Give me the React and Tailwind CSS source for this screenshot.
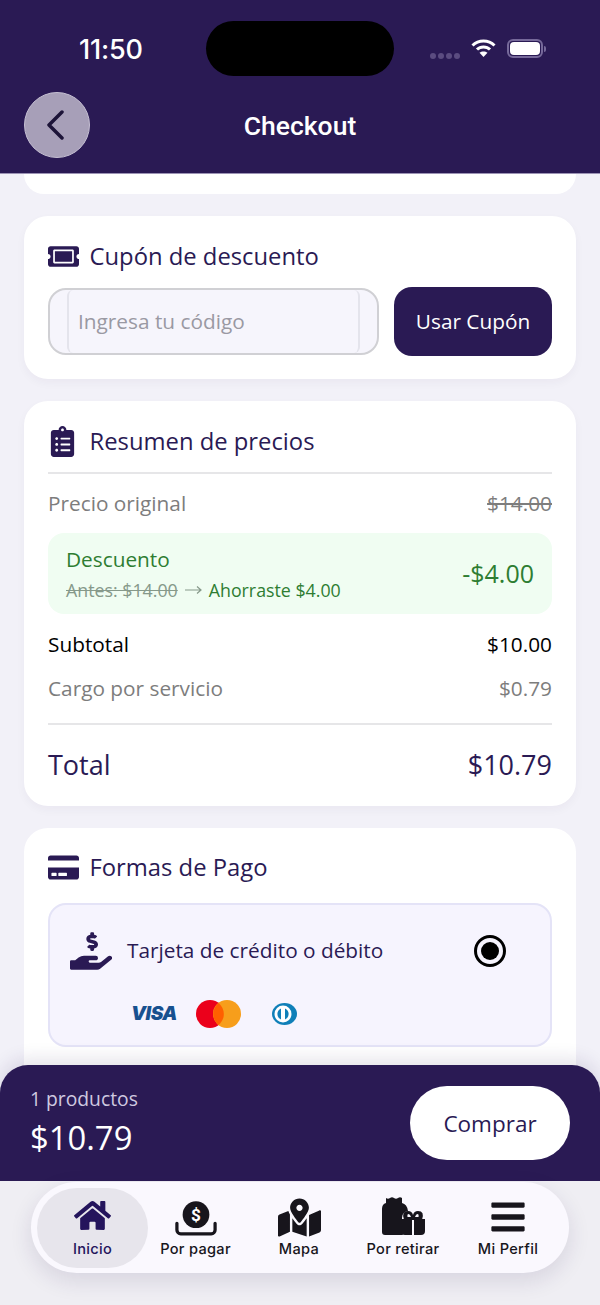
import {
  FaTicketAlt,
  FaClipboardList,
  FaCreditCard,
  FaHandHoldingUsd,
  FaHome,
  FaBars,
  FaMapMarkedAlt,
} from 'react-icons/fa'

const openSans = 'font-["Open_Sans",sans-serif]'

function StatusBar() {
  return (
    <div className="flex h-[76px] items-start">
      <span className='ml-[79px] mt-[36px] w-[63px] font-["Inter",sans-serif] text-[27px] leading-[28px] font-medium text-white tracking-[-0.2px]'>11:50</span>
      <div className="ml-[64px] mt-[21px] h-[55px] w-[188px] rounded-[28px] bg-black" />
      <div className="ml-[36px] mt-[39px] flex items-start">
        <div className="mt-[14px] flex gap-[2px]">
          <span className="h-[6px] w-[6px] rounded-full bg-[#5b4c80]" />
          <span className="h-[6px] w-[6px] rounded-full bg-[#5b4c80]" />
          <span className="h-[6px] w-[6px] rounded-full bg-[#5b4c80]" />
          <span className="h-[6px] w-[6px] rounded-full bg-[#5b4c80]" />
        </div>
        <svg className="ml-[11px]" width="25" height="18" viewBox="0 0 25 18" fill="none" stroke="white" strokeWidth="3">
          <path d="M1.5 6.5C7.5 0.5 17.5 0.5 23.5 6.5" />
          <path d="M6 10.5C9.5 7 15.5 7 19 10.5" />
          <path d="M12.5 18L8.5 13.8C10.8 12 14.2 12 16.5 13.8Z" fill="white" stroke="none" />
        </svg>
        <div className="ml-[11px] flex items-center">
          <div className="flex h-[19px] w-[36px] items-center justify-center rounded-[6px] border-2 border-[#76699a]">
            <div className="h-[13px] w-[30px] rounded-[4px] bg-white" />
          </div>
          <div className="ml-[1px] h-[6px] w-[2px] rounded-r-full bg-[#76699a]" />
        </div>
      </div>
    </div>
  )
}

function Header() {
  return (
    <header className="relative h-[174px] shrink-0 border-b border-[#9c93b5] bg-[#2a1a54]">
      <StatusBar />
      <div className="relative flex h-[97px] items-center justify-center pt-[3px]">
        <button
          type="button"
          aria-label="Volver"
          className="absolute left-[24px] top-[16px] flex h-[66px] w-[66px] items-center justify-center rounded-full border border-[#c5bfd2] bg-[#a79fb8]"
        >
          <svg className="mr-[3px]" width="20" height="30" viewBox="0 0 20 30" fill="none" stroke="#1d1438" strokeWidth="3.5" strokeLinecap="round" strokeLinejoin="round">
            <path d="M16 2L3 15L16 28" />
          </svg>
        </button>
        <h1 className='font-["Roboto",sans-serif] text-[26.5px] font-medium leading-[30px] text-white'>Checkout</h1>
      </div>
    </header>
  )
}

function CardTitle({ icon, children }) {
  return (
    <div className="flex items-center">
      <span className="flex w-[42px] shrink-0 items-center text-[#2a1a54]">{icon}</span>
      <h2 className={`${openSans} ml-[-0.5px] text-[23.8px] leading-[32px] text-[#2a1a54]`}>{children}</h2>
    </div>
  )
}

function CouponCard() {
  return (
    <section className="rounded-[24px] bg-white px-6 pb-[23px] pt-[24px] shadow-[0_4px_10px_rgba(42,26,84,0.04)]">
      <CardTitle icon={<FaTicketAlt size={31} />}>Cupón de descuento</CardTitle>
      <div className="mt-[15px] flex items-center justify-between">
        <div className="flex h-[67px] w-[331px] rounded-[18px] border-2 border-[#d0d0d4] bg-[#f6f5fc] pl-[17px] pr-[17px]">
          <div className={`${openSans} flex flex-1 items-center rounded-[6px] border-x-2 border-[#e4e4ec] pl-[9px] pt-[1px] text-[20.8px] text-[#9a99a3]`}>
            Ingresa tu código
          </div>
        </div>
        <button type="button" className={`${openSans} h-[69px] w-[158px] rounded-[18px] bg-[#2a1a54] text-[20.8px] text-white`}>
          Usar Cupón
        </button>
      </div>
    </section>
  )
}

function PriceRow({ label, value, className }) {
  return (
    <div className={`flex items-center justify-between ${openSans} ${className}`}>
      <span>{label}</span>
      <span>{value}</span>
    </div>
  )
}

function SummaryCard() {
  return (
    <section className="rounded-[24px] bg-white px-6 pb-[23px] pt-[24px] shadow-[0_4px_10px_rgba(42,26,84,0.04)]">
      <CardTitle icon={<FaClipboardList size={31} className="ml-[-1px]" />}>Resumen de precios</CardTitle>
      <div className="mt-[15px] border-t-2 border-[#e6e6e8]" />
      <PriceRow
        className="mt-[15px] h-[30px] text-[20.8px] text-[#7d7d7d]"
        label="Precio original"
        value={<span className="line-through">$14.00</span>}
      />
      <div className={`${openSans} mt-[14px] flex h-[81px] items-center justify-between rounded-[16px] bg-[#f0fdf2] pl-[18px] pr-[18px] text-[#2e7d32]`}>
        <div>
          <p className="text-[20.8px] leading-[28px]">Descuento</p>
          <p className="mt-[5px] flex items-center text-[17.8px] leading-[24px]">
            <span className="text-[#86998a] line-through">Antes: $14.00</span>
            <svg className="mx-[7px]" width="17" height="10" viewBox="0 0 17 10" fill="none" stroke="#86998a" strokeWidth="1.2">
              <path d="M0 5H16M12 1.5L16 5L12 8.5" />
            </svg>
            Ahorraste $4.00
          </p>
        </div>
        <span className="text-[25px]">-$4.00</span>
      </div>
      <PriceRow className="mt-[16px] h-[30px] text-[20.8px] text-black" label="Subtotal" value="$10.00" />
      <PriceRow className="mt-[14px] h-[30px] text-[20.8px] text-[#7d7d7d]" label="Cargo por servicio" value="$0.79" />
      <div className="mt-[19px] border-t-2 border-[#e6e6e8]" />
      <PriceRow className="mt-[22px] h-[36px] text-[27px] text-[#2a1a54]" label="Total" value="$10.79" />
    </section>
  )
}

function PaymentCard() {
  return (
    <section className="h-[400px] shrink-0 rounded-[24px] bg-white px-6 pt-[23px]">
      <CardTitle icon={<FaCreditCard size={31} />}>Formas de Pago</CardTitle>
      <div className="mt-[20px] h-[144px] rounded-[18px] border-2 border-[#e4e3f7] bg-[#f6f4fe] pl-[20px] pr-[44px] pt-[25px]">
        <div className="flex items-center justify-between">
          <div className="flex items-center">
            <FaHandHoldingUsd size={42} className="text-[#2a1a54]" />
            <span className={`${openSans} ml-[15px] text-[20.8px] text-[#2a1a54]`}>Tarjeta de crédito o débito</span>
          </div>
          <div className="flex h-[32px] w-[32px] items-center justify-center rounded-full border-[3px] border-black">
            <div className="h-[18px] w-[18px] rounded-full bg-black" />
          </div>
        </div>
        <div className="ml-[61px] mt-[28px] flex items-center">
          <span className='w-[45px] font-["Inter",sans-serif] text-[19px] font-black italic leading-[24px] tracking-[-0.5px] text-[#17508f]'>VISA</span>
          <svg className="ml-[20px]" width="45" height="28" viewBox="0 0 45 28">
            <circle cx="14" cy="14" r="14" fill="#eb001b" />
            <circle cx="31" cy="14" r="14" fill="#f79e1b" />
            <path d="M22.5 3a14 14 0 0 1 0 22a14 14 0 0 1 0-22z" fill="#ff5f00" />
          </svg>
          <svg className="ml-[31px]" width="25" height="24" viewBox="0 0 25 24">
            <ellipse cx="12.5" cy="12" rx="12.5" ry="11" fill="#0f7fb8" />
            <circle cx="11" cy="12" r="8.5" fill="white" />
            <path d="M9 6.5v11a6 6 0 0 1 0-11z" fill="#0f7fb8" />
            <path d="M13 6.5a6 6 0 0 1 0 11z" fill="#0f7fb8" />
          </svg>
        </div>
      </div>
    </section>
  )
}

function CheckoutBar() {
  return (
    <div className="flex h-[116px] items-center justify-between rounded-t-[28px] bg-[#2a1a54] pl-[30px] pr-[30px] shadow-[0_-6px_18px_rgba(42,26,84,0.12)]">
      <div className={`${openSans} pb-[2px]`}>
        <p className="text-[19.3px] leading-[24px] text-[#cfc9e0]">1 productos</p>
        <p className="mt-[7px] text-[32.8px] leading-[40px] text-white">$10.79</p>
      </div>
      <button type="button" className={`${openSans} h-[74px] w-[160px] rounded-[37px] bg-white pt-[1px] text-[22.5px] text-[#2a1a54]`}>
        Comprar
      </button>
    </div>
  )
}

function PayIcon() {
  return (
    <svg width="42" height="35" viewBox="0 0 44 36" fill="none">
      <circle cx="22" cy="14" r="14" fill="#17151c" />
      <text x="22" y="20.5" textAnchor="middle" fontSize="18" fontWeight="700" fill="white" fontFamily="Roboto, sans-serif">$</text>
      <path d="M2 23v7a4 4 0 0 0 4 4h32a4 4 0 0 0 4-4v-7" stroke="#17151c" strokeWidth="3.4" strokeLinecap="round" />
    </svg>
  )
}

function PickupIcon() {
  return (
    <svg width="44" height="39" viewBox="0 0 44 39" fill="#17151c">
      <path d="M5 1q2 1.5 4 0t4 0t4 0t4 0v5q5 1 6 8q-6 1-6 7v12q0 3 1 5H4q-3 0-3-3V12q0-5 4-6z" />
      <path fillRule="evenodd" d="M23 23q-3-9 4-9q4 0 5 4q1-4 5-4q7 0 4 9zM26.500 20h3.500q-1-3-2.500-3t-1 3zM34 20h3.500q.5-3-1-3t-2.500 3z" />
      <path d="M20 22h11v16h-7q-4 0-4-4z" />
      <path d="M33 22h11v12q0 4-4 4h-7z" />
    </svg>
  )
}

function NavItem({ icon, label, active, className = '' }) {
  return (
    <div className={`flex h-[80px] flex-col items-center justify-end pb-[10px] ${className} ${active ? 'rounded-[40px] bg-[#e7e5ec] text-[#24145c]' : 'text-[#17151c]'}`}>
      <div className="flex h-[38px] items-end">{icon}</div>
      <span className='mt-[4px] font-["Inter",sans-serif] text-[14.6px] font-medium leading-[18px] tracking-[0.3px]'>{label}</span>
    </div>
  )
}

function TabBar() {
  return (
    <div className="h-[124px] bg-[#efeef3] pt-[1px]">
      <nav className="mx-[31px] grid h-[91px] grid-cols-[111px_95px_112px_96px_1fr] items-center rounded-[46px] bg-[#faf8fe] pl-[6px] pr-[7px] shadow-[0_8px_22px_rgba(42,26,84,0.12)]">
        <NavItem active icon={<FaHome size={37} className="mb-[2px]" />} label="Inicio" />
        <NavItem icon={<PayIcon />} label="Por pagar" />
        <NavItem icon={<FaMapMarkedAlt size={43} className="mb-[-3px]" />} label="Mapa" />
        <NavItem icon={<PickupIcon />} label="Por retirar" />
        <NavItem className="pl-[3px]" icon={<FaBars size={38} />} label="Mi Perfil" />
      </nav>
    </div>
  )
}

export default function App() {
  return (
    <div className="relative flex h-[1305px] w-[600px] flex-col overflow-hidden bg-[#f2f1f8]">
      <Header />
      <main className="flex flex-col gap-[22px] px-6">
        <div className="h-[20px] rounded-b-[24px] bg-white" />
        <CouponCard />
        <SummaryCard />
        <PaymentCard />
      </main>
      <div className="absolute bottom-0 left-0 w-full">
        <CheckoutBar />
        <TabBar />
      </div>
    </div>
  )
}
